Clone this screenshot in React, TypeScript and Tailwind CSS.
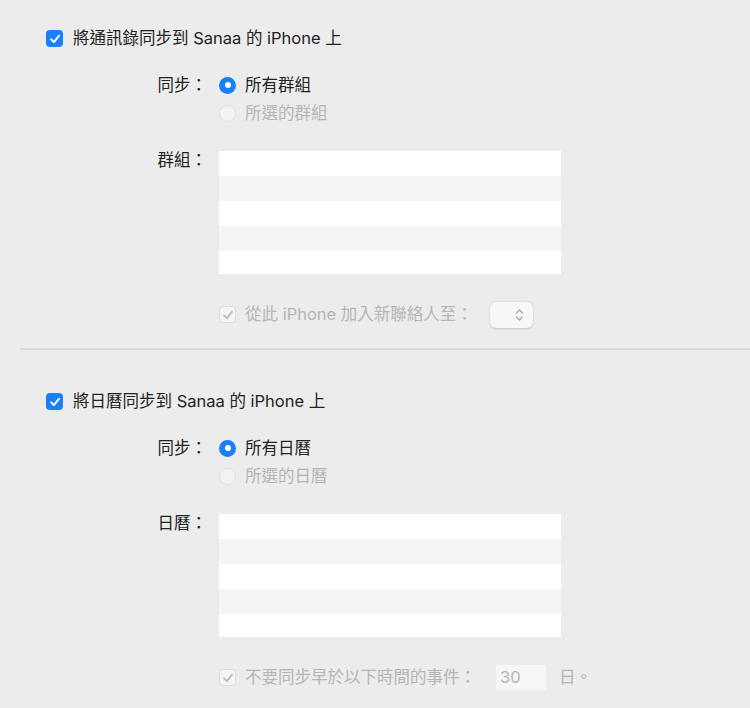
import React from 'react';

const CheckIcon = ({ color }: { color: string }) => (
  <svg width="12" height="12" viewBox="0 0 12 12" fill="none">
    <path d="M2.2 6.4 L4.9 9.1 L9.9 2.9" stroke={color} strokeWidth="2" strokeLinecap="round" strokeLinejoin="round" />
  </svg>
);

const Checkbox = ({ disabled }: { disabled?: boolean }) =>
  disabled ? (
    <div className="w-[17px] h-[17px] shrink-0 rounded-[4px] bg-[#f4f4f4] border border-[#dcdcdc] flex items-center justify-center">
      <CheckIcon color="#bdbdbd" />
    </div>
  ) : (
    <div className="w-[17px] h-[17px] shrink-0 rounded-[4px] bg-[#1a7ffb] flex items-center justify-center">
      <CheckIcon color="#ffffff" />
    </div>
  );

const Radio = ({ selected }: { selected?: boolean }) =>
  selected ? (
    <div className="w-[17px] h-[17px] shrink-0 rounded-full bg-[#1a7ffb] flex items-center justify-center">
      <div className="w-[6px] h-[6px] rounded-full bg-white" />
    </div>
  ) : (
    <div className="w-[17px] h-[17px] shrink-0 rounded-full bg-[#f3f3f3] border border-[#e0e0e0]" />
  );

const ListBox = () => (
  <div className="w-[342px] flex flex-col">
    <div className="h-[25px] bg-white" />
    <div className="h-[25px] bg-[#f4f5f5]" />
    <div className="h-[25px] bg-white" />
    <div className="h-[25px] bg-[#f4f5f5]" />
    <div className="h-[23px] bg-white" />
  </div>
);

interface SectionProps {
  title: string;
  all: string;
  selected: string;
  listLabel: string;
  footer: React.ReactNode;
}

const Section: React.FC<SectionProps> = ({ title, all, selected, listLabel, footer }) => (
  <div className="pl-[46px]">
    <div className="flex items-center h-[17px] gap-[10px]">
      <Checkbox />
      <span className="text-[#222] leading-[17px]">{title}</span>
    </div>

    <div className="flex mt-[28px] h-[20px] items-center">
      <div className="w-[161px] text-right text-[#222] leading-[20px]">同步：</div>
      <div className="ml-[12px] flex items-center gap-[9px]">
        <Radio selected />
        <span className="text-[#222] leading-[20px]">{all}</span>
      </div>
    </div>
    <div className="flex mt-[8px] h-[20px] items-center">
      <div className="w-[161px]" />
      <div className="ml-[12px] flex items-center gap-[9px]">
        <Radio />
        <span className="text-[#b5b5b5] leading-[20px]">{selected}</span>
      </div>
    </div>

    <div className="flex mt-[28px]">
      <div className="w-[161px] text-right text-[#222] leading-[18px]">{listLabel}</div>
      <div className="ml-[12px]">
        <ListBox />
      </div>
    </div>

    <div className="flex mt-[27px] h-[27px] items-center">
      <div className="w-[161px]" />
      <div className="ml-[12px] flex items-center">{footer}</div>
    </div>
  </div>
);

export default function App() {
  return (
    <div className="w-[750px] h-[708px] overflow-hidden bg-[#ececec] text-[16.5px] font-['Inter','Noto_Sans_CJK_TC',sans-serif]">
      <div className="pt-[30px]">
        <Section
          title="將通訊錄同步到 Sanaa 的 iPhone 上"
          all="所有群組"
          selected="所選的群組"
          listLabel="群組："
          footer={
            <>
              <Checkbox disabled />
              <span className="ml-[9px] text-[#b5b5b5]">從此 iPhone 加入新聯絡人至：</span>
              <div className="ml-[17px] w-[43px] h-[26px] rounded-[6px] bg-[#f7f7f7] shadow-[0_0.5px_2px_rgba(0,0,0,0.18)] flex items-center justify-end pr-[9px]">
                <svg width="9" height="14" viewBox="0 0 9 14" fill="none">
                  <path d="M1.5 5 L4.5 2 L7.5 5" stroke="#a9a9a9" strokeWidth="1.4" strokeLinecap="round" strokeLinejoin="round" />
                  <path d="M1.5 9 L4.5 12 L7.5 9" stroke="#a9a9a9" strokeWidth="1.4" strokeLinecap="round" strokeLinejoin="round" />
                </svg>
              </div>
            </>
          }
        />
      </div>

      <div className="ml-[20px] mt-[20px] h-[2px] bg-[#dadada]" />

      <div className="pt-[43px]">
        <Section
          title="將日曆同步到 Sanaa 的 iPhone 上"
          all="所有日曆"
          selected="所選的日曆"
          listLabel="日曆："
          footer={
            <>
              <Checkbox disabled />
              <span className="ml-[9px] text-[#b5b5b5]">不要同步早於以下時間的事件：</span>
              <div className="ml-[20px] w-[50px] h-[25px] bg-[#f6f6f6] text-[#b5b5b5] leading-[25px] pl-[4px]">30</div>
              <span className="ml-[13px] text-[#b5b5b5]">日。</span>
            </>
          }
        />
      </div>
    </div>
  );
}
